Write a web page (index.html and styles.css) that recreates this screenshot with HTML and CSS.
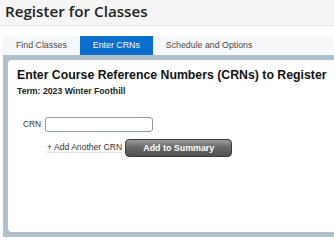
FILE: index.html
```html
<!DOCTYPE html>
<html lang="en">
<head>
	<meta charset="UTF-8">
	<title>Register for Classes</title>
	<link rel="stylesheet" href="styles.css">
</head>
<body>
	<div class="header">
		<h1>Register for Classes</h1>
	</div>
	<div class="tabs">
		<span class="tab">Find Classes</span>
		<span class="tab active">Enter CRNs</span>
		<span class="tab">Schedule and Options</span>
	</div>
	<div class="frame">
		<div class="panel">
			<h2>Enter Course Reference Numbers (CRNs) to Register</h2>
			<div class="term">Term: 2023 Winter Foothill</div>
			<div class="crn-row">
				<label for="crn1">CRN</label>
				<input type="text" id="crn1">
			</div>
			<div class="add-row">
				<span class="add-link">+ Add Another CRN</span>
				<span class="btn">Add to Summary</span>
			</div>
		</div>
	</div>
</body>
</html>
```

FILE: styles.css
```css
body{margin: 0;font-family: "Liberation Sans", Arial, sans-serif;background: #fff;overflow: hidden;}
.header{height: 25px;background: #f5f5f5;border-bottom: 1px solid #e6e6e6;}
.header h1{margin: 0;padding-left: 5px;font-family: "Open Sans", sans-serif;font-weight: 600;font-size: 15.2px;line-height: 22px;color: #222;}
.tabs{display: flex;height: 19px;margin: 10px 0 0 3px;background: #f6f7f9;}
.tab{padding: 0 13px;font-size: 8.8px;line-height: 19px;color: #4a4a4a;white-space: nowrap;}
.tab.active{background: #0b6dcc;color: #fff;}
.frame{margin-left: 3px;padding: 5px 0 5px 5px;background: #b1bfcd;}
.panel{height: 172px;box-sizing: border-box;padding: 9.5px 0 0 9px;background: #fff;border-radius: 4px 0 0 4px;}
.panel h2{margin: 0;font-size: 12.3px;line-height: 10px;font-weight: bold;color: #111;white-space: nowrap;}
.term{margin-top: 7px;font-size: 8.7px;font-weight: bold;line-height: 9px;color: #222;}
.crn-row{display: flex;align-items: center;gap: 4px;margin: 21px 0 0 6px;}
.crn-row label{font-size: 8.4px;color: #333;}
.crn-row input{width: 108px;height: 15px;box-sizing: border-box;margin: 0;padding: 0 4px;border: 1px solid #8f979f;border-radius: 3px;outline: none;}
.add-row{display: flex;align-items: center;gap: 3px;margin: 7px 0 0 30px;}
.add-link{font-size: 8.6px;color: #333;line-height: 10px;border-bottom: 1px solid #e2e2e2;}
.btn{display: block;width: 107px;height: 18px;box-sizing: border-box;border: 1px solid #3a3a3a;border-radius: 4px;
	background: linear-gradient(#9a9a9a, #6b6b6b 45%, #4f4f4f);
	color: #fff;font-size: 8.9px;font-weight: bold;line-height: 16px;text-align: center;cursor: pointer;}
```
